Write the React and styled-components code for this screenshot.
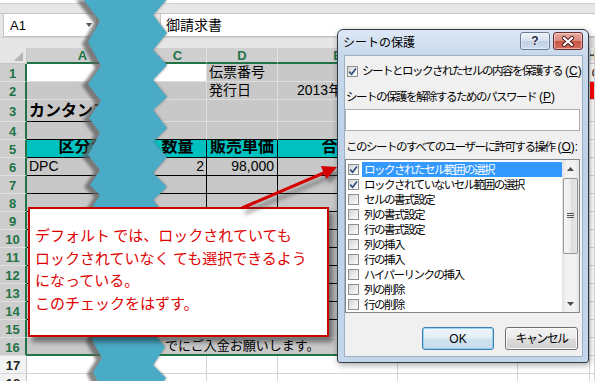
import React from 'react';
import styled, { createGlobalStyle } from 'styled-components';

const JP = `"Liberation Sans", "Noto Sans CJK JP", sans-serif`;
const GREEN = '#217346';

const Global = createGlobalStyle`
  html, body { margin: 0; padding: 0; background: #fff; }
  body { font-family: ${JP}; }
`;

const Page = styled.div`
  position: relative;
  width: 595px;
  height: 381px;
  overflow: hidden;
  background: #fff;
  display: flex;
  flex-direction: column;
`;

const RibbonEdge = styled.div`
  flex: none;
  height: 9px;
  margin-top: 3px;
  border-top: 1px solid #d2d2d2;
  border-bottom: 1px solid #c6c6c6;
  background: #e6e6e6;
`;

const FormulaBar = styled.div`
  flex: none;
  height: 23px;
  display: flex;
  background: #e6e6e6;
`;

const NameBox = styled.div`
  box-sizing: border-box;
  width: 94px;
  margin-left: 3px;
  background: #fff;
  border: 1px solid #c6c6c6;
  border-top: none;
  display: flex;
  align-items: center;
  justify-content: space-between;
  padding: 0 4px 0 6px;
  font: 400 13px/1 ${JP};
  color: #000;
`;

const FormulaInput = styled.div`
  flex: 1;
  margin-left: 63px;
  background: #fff;
  border-left: 1px solid #c6c6c6;
  border-bottom: 1px solid #c6c6c6;
  display: flex;
  align-items: center;
  padding-left: 5px;
  font: 400 14px/1 ${JP};
  color: #000;
`;

const GapBand = styled.div`
  flex: none;
  height: 10px;
  border-top: 1px solid #d0d0d0;
  background: #e6e6e6;
`;

const COLS = [27, 112, 10, 58, 71, 120, 120, 72, 5];
const LETTERS = ['', 'A', 'B', 'C', 'D', 'E', 'F', 'G', 'H'];
const ROW_H = [16, 18, 18, 22, 18, 18, ...Array(11).fill(18), 18, 18];

const Sheet = styled.div`
  flex: none;
  display: grid;
  grid-template-columns: ${COLS.map((w) => w + 'px').join(' ')};
  grid-template-rows: ${ROW_H.map((h) => h + 'px').join(' ')};
`;

const Corner = styled.div`
  box-sizing: border-box;
  background: #e6e6e6;
  border-right: 1px solid #c6c6c6;
  border-bottom: 1px solid #c6c6c6;
  display: flex;
  align-items: flex-end;
  justify-content: flex-end;
  padding: 0 3px 2px 0;
`;

const ColHead = styled.div`
  box-sizing: border-box;
  overflow: hidden;
  display: flex;
  align-items: center;
  justify-content: center;
  background: ${(p) => (p.$sel ? '#cfcfcf' : '#f3f3f3')};
  color: ${(p) => (p.$sel ? GREEN : '#444')};
  border-right: 1px solid ${(p) => (p.$sel ? '#e2e2e2' : '#d4d4d4')};
  border-bottom: ${(p) => (p.$sel ? `2px solid ${GREEN}` : '1px solid #c6c6c6')};
  font: 700 13px/1 ${JP};
`;

const RowHead = styled.div`
  box-sizing: border-box;
  display: flex;
  align-items: center;
  justify-content: center;
  background: ${(p) => (p.$sel ? '#cdcdcd' : '#f3f3f3')};
  color: ${(p) => (p.$sel ? GREEN : '#222')};
  border-right: ${(p) => (p.$sel ? `2px solid ${GREEN}` : '1px solid #c6c6c6')};
  border-bottom: 1px solid ${(p) => (p.$sel ? '#e0e0e0' : '#d8d8d8')};
  font: 700 13px/1 ${JP};
  padding-top: 1px;
`;

const Cell = styled.div`
  box-sizing: border-box;
  min-width: 0;
  overflow: hidden;
  white-space: nowrap;
  display: flex;
  align-items: flex-end;
  justify-content: ${(p) => p.$justify || 'flex-start'};
  grid-column: span ${(p) => p.$span || 1};
  background: ${(p) => p.$bg};
  border-right: ${(p) => p.$br};
  border-bottom: ${(p) => p.$bb};
  padding: 0 ${(p) => p.$pr ?? 2}px 0 ${(p) => p.$pl ?? 2}px;
  font: ${(p) => (p.$bold ? 700 : 400)} ${(p) => p.$size || 14}px/1.25 ${JP};
  color: #000;
`;

const CONTENT = {
  '1-4': { text: '伝票番号' },
  '1-8': { text: 'の', pl: 1 },
  '2-4': { text: '発行日' },
  '2-5': { text: '2013年10月1日', pl: 19 },
  '3-1': { text: 'カンタンア', bold: true, size: 16 },
  '5-1': { text: '区分名', bold: true, size: 16, justify: 'center' },
  '5-3': { text: '数量', bold: true, size: 16, justify: 'center' },
  '5-4': { text: '販売単価', bold: true, size: 16, justify: 'center' },
  '5-5': { text: '合計', bold: true, size: 16, justify: 'center' },
  '6-1': { text: 'DPC' },
  '6-3': { text: '2', justify: 'flex-end' },
  '6-4': { text: '98,000', justify: 'flex-end', pr: 3 },
  '16-3': { text: 'でにご入金お願いします。', size: 13, pl: 16, span: 3 },
};

function cellProps(r, c) {
  const sel = r <= 16 && c >= 1 && c <= 5;
  let bg = '#fff';
  if (sel) {
    if (r === 1 && c <= 3) bg = '#fff';
    else if (r === 5) bg = '#00c0c0';
    else bg = '#c8c8c8';
  }
  if (r === 2 && c === 8) bg = '#ff0000';
  const grid = sel ? '#dedede' : '#d4d4d4';
  let bb = `1px solid ${grid}`;
  let br = `1px solid ${grid}`;
  if (sel && r >= 4 && r <= 14) bb = '1px solid #000';
  if (r === 3 && c === 1) bb = '1px solid #000';
  if (sel && r >= 5 && r <= 14) br = '1px solid #000';
  if (sel && r === 16) bb = `2px solid ${GREEN}`;
  return { bg, bb, br };
}

function SheetGrid() {
  const cells = [];
  cells.push(
    <Corner key="corner">
      <svg width="9" height="9" viewBox="0 0 9 9">
        <path d="M9 0 L9 9 L0 9 Z" fill="#b4b4b4" />
      </svg>
    </Corner>
  );
  for (let c = 1; c < COLS.length; c++) {
    cells.push(
      <ColHead key={`h${c}`} $sel={c <= 5}>
        {LETTERS[c]}
      </ColHead>
    );
  }
  for (let r = 1; r <= 18; r++) {
    cells.push(
      <RowHead key={`r${r}`} $sel={r <= 16}>
        {r}
      </RowHead>
    );
    for (let c = 1; c < COLS.length; c++) {
      if (r === 16 && (c === 4 || c === 5)) continue;
      const p = cellProps(r, c);
      const k = CONTENT[`${r}-${c}`] || {};
      cells.push(
        <Cell
          key={`${r}-${c}`}
          $bg={p.bg}
          $bb={p.bb}
          $br={p.br}
          $bold={k.bold}
          $size={k.size}
          $justify={k.justify}
          $pl={k.pl}
          $pr={k.pr}
          $span={k.span}
        >
          {k.text}
        </Cell>
      );
    }
  }
  return <Sheet>{cells}</Sheet>;
}

/* torn-paper band */
const LEFT = [[82,-2],[100,21],[88,42],[101,66],[88,84],[101,101],[89,118],[100,133],[88,155],[100,170],[90,185],[100,195],[88,214],[100,236],[89,258],[100,280],[88,300],[100,322],[92,340],[102,358],[93,372],[100,386]];
const RIGHT = [[168,-2],[153,15],[167,33],[153,50],[167,65],[153,80],[167,97],[153,110],[167,128],[153,142],[167,157],[153,173],[167,187],[153,200],[167,218],[153,236],[167,254],[153,272],[167,290],[153,308],[166,322],[155,335],[165,347],[153,365],[166,378],[160,386]];
const pts = (a) => a.map((p) => p.join(',')).join(' ');
const BAND = pts([...LEFT, ...RIGHT.slice().reverse()]);
const SHADOW = pts([...LEFT.map(([x, y]) => [x - 6, y + 2]), ...RIGHT.slice().reverse()]);

const Overlay = styled.svg`
  position: absolute;
  left: 0;
  top: 0;
  pointer-events: none;
`;

function Tear() {
  return (
    <Overlay width="595" height="381" viewBox="0 0 595 381">
      <defs>
        <filter id="tearBlur" x="-20%" y="-5%" width="140%" height="110%">
          <feGaussianBlur stdDeviation="1.4" />
        </filter>
      </defs>
      <polygon points={SHADOW} fill="#5e5e5e" opacity="0.75" filter="url(#tearBlur)" />
      <polygon points={BAND} fill="#4aabc6" />
    </Overlay>
  );
}

function Arrow() {
  return (
    <Overlay width="595" height="381" viewBox="0 0 595 381">
      <defs>
        <filter id="arrowBlur" x="-20%" y="-50%" width="140%" height="200%">
          <feGaussianBlur stdDeviation="2" />
        </filter>
      </defs>
      <g transform="translate(3 5)" filter="url(#arrowBlur)" opacity="0.55">
        <line x1="242" y1="208" x2="326" y2="172" stroke="#333" strokeWidth="3" />
        <polygon points="337,167 326.5,179 320.8,166" fill="#333" />
      </g>
      <line x1="242" y1="208" x2="326" y2="172" stroke="#d40000" strokeWidth="3" />
      <polygon points="337,167 326.5,179 320.8,166" fill="#d40000" />
    </Overlay>
  );
}

const Callout = styled.div`
  position: absolute;
  left: 28px;
  top: 207px;
  width: 301px;
  height: 130px;
  box-sizing: border-box;
  background: #fff;
  border: 2px solid #c80000;
  box-shadow: 4px 5px 5px rgba(0, 0, 0, 0.45);
  padding: 15px 0 0 5px;
  color: #e00000;
  font: 400 15px/22.5px "Noto Sans CJK JP", sans-serif;
  white-space: nowrap;
`;

const CalloutLine = styled.div``;

/* dialog */
const Dialog = styled.div`
  position: absolute;
  left: 337px;
  top: 29px;
  width: 252px;
  height: 334px;
  box-sizing: border-box;
  border: 1px solid #2f3a45;
  border-radius: 6px 6px 3px 3px;
  background: linear-gradient(#dde8f5, #c7d8ec 26px, #bcd0e7 40%, #c4d6ea);
  box-shadow: 1px 2px 6px rgba(0, 0, 0, 0.35);
  display: flex;
  flex-direction: column;
  padding: 0 5px 5px 6px;
`;

const TitleBar = styled.div`
  flex: none;
  height: 25px;
  display: flex;
  align-items: flex-start;
`;

const Title = styled.div`
  flex: 1;
  margin: 6px 0 0 -1px;
  font: 400 12px/14px ${JP};
  color: #000;
`;

const CapButtons = styled.div`
  display: flex;
  gap: 3px;
  margin-top: 2px;
`;

const CapButton = styled.div`
  box-sizing: border-box;
  width: 30px;
  height: 18px;
  border-radius: 3px;
  border: 1px solid ${(p) => (p.$close ? '#6a2c2c' : '#687c96')};
  background: ${(p) =>
    p.$close
      ? 'linear-gradient(#e8a89d, #d98a7e 48%, #c65445 52%, #d1705e)'
      : 'linear-gradient(#edf2f8, #d5e1ee 48%, #bfd0e3 52%, #cfdcec)'};
  box-shadow: inset 0 0 0 1px rgba(255, 255, 255, 0.45);
  display: flex;
  align-items: center;
  justify-content: center;
  font: 700 12px/1 ${JP};
  color: #1c2a44;
  text-shadow: 0 0 2px #fff, 0 0 2px #fff;
`;

const Body = styled.div`
  flex: 1;
  background: #f0f0f0;
  border: 1px solid #9fb0c6;
  display: flex;
  flex-direction: column;
  padding: 0 2px 0 0;
  font: 400 11.5px/14px ${JP};
  letter-spacing: -1.5px;
  color: #000;
`;

const CheckRow = styled.div`
  display: flex;
  align-items: center;
  height: 14px;
  margin: 8px 0 0 2px;
`;

const Box = styled.span`
  flex: none;
  width: 11px;
  height: 11px;
  box-sizing: border-box;
  border: 1px solid #8e8f8f;
  background: linear-gradient(135deg, #d4d4d4, #eeeeee 60%, #fbfbfb);
  display: flex;
  align-items: center;
  justify-content: center;
`;

const Label = styled.div`
  height: 14px;
  margin-top: ${(p) => p.$mt}px;
  padding-left: 1px;
  white-space: nowrap;
`;

const CheckText = styled.span`
  margin-left: 4px;
  white-space: nowrap;
`;

const Key = styled.span`
  margin-left: 3px;
  letter-spacing: 0;
  font-size: 12px;
`;

const TextBox = styled.div`
  height: 22px;
  box-sizing: border-box;
  margin-top: 5px;
  border: 1px solid #abadb3;
  background: #fff;
`;

const ListBox = styled.div`
  height: 154px;
  box-sizing: border-box;
  margin-top: 5px;
  border: 1px solid #828790;
  background: #fff;
  display: flex;
`;

const Items = styled.div`
  flex: 1;
  padding: 2px 0 0 2px;
  display: flex;
  flex-direction: column;
`;

const Item = styled.div`
  height: 15px;
  display: flex;
  align-items: center;
`;

const ItemText = styled.span`
  flex: 1;
  height: 15px;
  margin-left: 3px;
  padding-left: 2px;
  display: flex;
  align-items: center;
  white-space: nowrap;
  background: ${(p) => (p.$sel ? '#3399ff' : 'transparent')};
  color: ${(p) => (p.$sel ? '#fff' : '#000')};
`;

const ScrollBar = styled.div`
  flex: none;
  width: 17px;
  background: linear-gradient(90deg, #e3e3e3, #f2f2f2 25%, #f2f2f2 75%, #e3e3e3);
  display: flex;
  flex-direction: column;
  align-items: center;
`;

const ScrollArrow = styled.div`
  flex: none;
  width: 17px;
  height: 17px;
  display: flex;
  align-items: center;
  justify-content: center;
`;

const Thumb = styled.div`
  flex: none;
  width: 15px;
  height: 76px;
  margin-top: 1px;
  box-sizing: border-box;
  border: 1px solid #979797;
  border-radius: 2px;
  background: linear-gradient(90deg, #f6f6f6, #ececec 50%, #dcdcdc 51%, #e4e4e4);
  display: flex;
  align-items: center;
  justify-content: center;
`;

const Track = styled.div`
  flex: 1;
`;

const ButtonRow = styled.div`
  display: flex;
  justify-content: flex-end;
  gap: 11px;
  margin-top: 14px;
  padding-right: 2px;
  letter-spacing: 0;
`;

const Button = styled.div`
  box-sizing: border-box;
  width: ${(p) => p.$w}px;
  height: 23px;
  border-radius: 3px;
  border: 1px solid ${(p) => (p.$default ? '#3c7fb1' : '#707070')};
  background: ${(p) =>
    p.$default
      ? 'linear-gradient(#eef6fb, #e2eef6 48%, #cfe2ef 52%, #c6dbea)'
      : 'linear-gradient(#f2f2f2, #ebebeb 48%, #dddddd 52%, #cfcfcf)'};
  box-shadow: inset 0 0 0 1px ${(p) => (p.$default ? 'rgba(120,200,240,0.7)' : '#fbfbfb')};
  display: flex;
  align-items: center;
  justify-content: center;
  font: 400 12px/1 ${JP};
  letter-spacing: ${(p) => (p.$default ? '0' : '-1.6px')};
  color: #000;
`;

const Check = () => (
  <svg width="9" height="9" viewBox="0 0 9 9">
    <path d="M1.2 4.6 L3.6 7.2 L7.9 1.5" fill="none" stroke="#2a4a7a" strokeWidth="1.6" />
  </svg>
);

const ITEMS = [
  ['ロックされたセル範囲の選択', true, true],
  ['ロックされていないセル範囲の選択', true, false],
  ['セルの書式設定', false, false],
  ['列の書式設定', false, false],
  ['行の書式設定', false, false],
  ['列の挿入', false, false],
  ['行の挿入', false, false],
  ['ハイパーリンクの挿入', false, false],
  ['列の削除', false, false],
  ['行の削除', false, false],
];

function ProtectDialog() {
  return (
    <Dialog>
      <TitleBar>
        <Title>シートの保護</Title>
        <CapButtons>
          <CapButton>?</CapButton>
          <CapButton $close>
            <svg width="14" height="11" viewBox="0 0 14 11">
              <path d="M3 2 L11 9 M11 2 L3 9" stroke="#4a1e1e" strokeWidth="4" strokeLinecap="round" />
              <path d="M3 2 L11 9 M11 2 L3 9" stroke="#fff" strokeWidth="2.2" strokeLinecap="round" />
            </svg>
          </CapButton>
        </CapButtons>
      </TitleBar>
      <Body>
        <CheckRow>
          <Box>
            <Check />
          </Box>
          <CheckText>
            シートとロックされたセルの内容を保護する<Key>(<u>C</u>)</Key>
          </CheckText>
        </CheckRow>
        <Label $mt={12}>
          シートの保護を解除するためのパスワード<Key>(<u>P</u>)</Key>
        </Label>
        <TextBox />
        <Label $mt={9}>
          このシートのすべてのユーザーに許可する操作<Key>(<u>O</u>):</Key>
        </Label>
        <ListBox>
          <Items>
            {ITEMS.map(([t, on, sel]) => (
              <Item key={t}>
                <Box>{on && <Check />}</Box>
                <ItemText $sel={sel}>{t}</ItemText>
              </Item>
            ))}
          </Items>
          <ScrollBar>
            <ScrollArrow>
              <svg width="7" height="4" viewBox="0 0 7 4">
                <path d="M0 4 L3.5 0 L7 4 Z" fill="#4d4d4d" />
              </svg>
            </ScrollArrow>
            <Thumb>
              <svg width="7" height="6" viewBox="0 0 7 6">
                <path d="M0 0.5 H7 M0 2.5 H7 M0 4.5 H7" stroke="#555" strokeWidth="1" />
              </svg>
            </Thumb>
            <Track />
            <ScrollArrow>
              <svg width="7" height="4" viewBox="0 0 7 4">
                <path d="M0 0 L3.5 4 L7 0 Z" fill="#4d4d4d" />
              </svg>
            </ScrollArrow>
          </ScrollBar>
        </ListBox>
        <ButtonRow>
          <Button $w={72} $default>
            OK
          </Button>
          <Button $w={73}>キャンセル</Button>
        </ButtonRow>
      </Body>
    </Dialog>
  );
}

export default function App() {
  return (
    <>
      <Global />
      <Page>
        <RibbonEdge />
        <FormulaBar>
          <NameBox>
            A1
            <svg width="6" height="4" viewBox="0 0 6 4">
              <path d="M0 0 L6 0 L3 4 Z" fill="#555" />
            </svg>
          </NameBox>
          <FormulaInput>御請求書</FormulaInput>
        </FormulaBar>
        <GapBand />
        <SheetGrid />
        <Tear />
        <Callout>
          <CalloutLine>デフォルト では、ロックされていても</CalloutLine>
          <CalloutLine>ロックされていなく ても選択できるよう</CalloutLine>
          <CalloutLine>になっている。</CalloutLine>
          <CalloutLine>このチェックをはずす。</CalloutLine>
        </Callout>
        <Arrow />
        <ProtectDialog />
      </Page>
    </>
  );
}
